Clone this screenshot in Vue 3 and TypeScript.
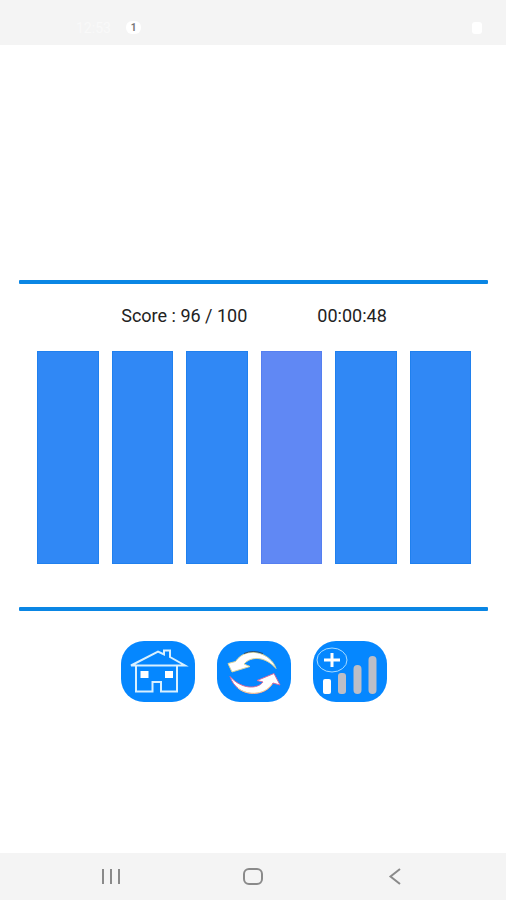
<script setup lang="ts">
import { ref } from 'vue'

interface Bar {
  id: number
  active: boolean
}

const score = ref(96)
const maxScore = 100
const elapsed = ref('00:00:48')
const bars = ref<Bar[]>([1, 2, 3, 4, 5, 6].map((id) => ({ id, active: id === 4 })))

function select(id: number) {
  bars.value.forEach((bar) => {
    bar.active = bar.id === id
  })
}
</script>

<template>
  <div class="screen">
    <header class="status">
      <span class="clock">12:53</span>
      <span class="badge">1</span>
      <span class="battery"></span>
    </header>

    <main class="main">
      <section class="game">
        <div class="info">
          <span>Score : {{ score }} / {{ maxScore }}</span>
          <span>{{ elapsed }}</span>
        </div>
        <div class="bars">
          <button
            v-for="bar in bars"
            :key="bar.id"
            type="button"
            class="bar"
            :class="{ active: bar.active }"
            :aria-label="`Bar ${bar.id}`"
            @click="select(bar.id)"
          ></button>
        </div>
      </section>

      <div class="actions">
        <button type="button" class="action" aria-label="Home">
          <svg viewBox="0 0 74 61" fill="none" stroke="#d8f0ff" stroke-width="2">
            <path d="M10 24.5 37 10.5l6 3V9.500h6V16L64 24.500Z" />
            <path d="M15 25v25.500H31.500V41h8.500v9.500h16V25" />
            <path d="M19.500 30h8v7h-8zM44 30h8v7h-8z" fill="#fff" stroke="none" />
          </svg>
        </button>
        <button type="button" class="action" aria-label="Restart">
          <svg viewBox="0 0 74 61" stroke-linejoin="round">
            <path
              d="M11 22.500 15 31 33 25.500 27 23C34 15 48 15 59 27.500C54 12 30 4 18.500 20.500Z"
              fill="#fff"
              stroke="#d9d39a"
              stroke-width="1"
            />
            <path d="M27 12.500Q36 8.500 46 12.500" fill="none" stroke="#344d68" stroke-width="1" />
            <path
              d="M13 35.500C20 57 48 57 56 42L63 44 57 32.500 40 39.500 46 41C41 48 25 49 13 35.500Z"
              fill="#fff"
              stroke="#d66a9c"
              stroke-width="1"
            />
            <path d="M21 47C30 55 48 54 55 43" fill="none" stroke="#eee1a0" stroke-width="1" />
          </svg>
        </button>
        <button type="button" class="action" aria-label="Increase level">
          <svg viewBox="0 0 74 61">
            <rect x="10" y="38" width="8" height="15" rx="2" fill="#fff" />
            <rect x="25" y="32" width="8" height="21" rx="3" fill="#bcbec7" />
            <rect x="40.500" y="24" width="8" height="29" rx="4" fill="#bcbec7" />
            <rect x="55.500" y="15" width="8" height="38" rx="4" fill="#bcbec7" />
            <ellipse cx="19" cy="19" rx="15" ry="12" fill="none" stroke="#a9dcff" stroke-width="1" />
            <path d="M19 12v14M11 19h16" stroke="#fff" stroke-width="3" />
          </svg>
        </button>
      </div>
    </main>

    <nav class="nav" aria-label="System navigation">
      <button type="button" aria-label="Recent apps">
        <svg viewBox="0 0 24 24"><path d="M4 4v15M12 4v15M20 4v15" /></svg>
      </button>
      <button type="button" aria-label="Home screen">
        <svg viewBox="0 0 24 24"><rect x="3" y="4" width="18" height="15" rx="5" /></svg>
      </button>
      <button type="button" aria-label="Back">
        <svg viewBox="0 0 24 24"><path d="M17 4 7.500 11.500 17 19" /></svg>
      </button>
    </nav>
  </div>
</template>

<style>
body {
  margin: 0;
  background: #fff;
}
</style>

<style scoped>
.screen {
  min-height: 100vh;
  display: flex;
  flex-direction: column;
  font-family: Roboto, sans-serif;
  color: #222;
}

button {
  padding: 0;
  border: 0;
  background: none;
  cursor: pointer;
}

svg {
  display: block;
}

.status {
  height: 45px;
  box-sizing: border-box;
  padding: 10px 24px 0 76px;
  display: flex;
  align-items: center;
  background: #f4f4f4;
}

.clock {
  width: 50px;
  font-size: 14px;
  line-height: 16px;
  color: #f9f9f9;
}

.badge {
  width: 15px;
  height: 13px;
  border-radius: 6px;
  background: #fff;
  color: #777;
  font-size: 10px;
  font-weight: 700;
  line-height: 13px;
  text-align: center;
}

.battery {
  width: 10px;
  height: 12px;
  margin-left: auto;
  border-radius: 3px;
  background: #fff;
}

.main {
  flex: 1;
  padding: 235px 18px 32px 19px;
}

.game {
  position: relative;
  padding: 24px 17px 47px 18px;
}

.game::before,
.game::after {
  content: '';
  position: absolute;
  left: 0;
  right: 0;
  height: 4px;
  border-radius: 1px;
  background: #0a86e4;
}

.game::before {
  top: 0;
}

.game::after {
  bottom: 0;
}

.info {
  display: flex;
  justify-content: center;
  gap: 70px;
  margin-bottom: 23px;
  font-size: 18px;
  line-height: 24px;
  white-space: nowrap;
}

.bars {
  display: grid;
  grid-template-columns: repeat(6, 1fr);
  gap: 13px;
}

.bar {
  height: 213px;
  border: 1px solid #2080ee;
  background: #3088f5;
}

.bar.active {
  border-color: #557ff0;
  background: #6088f4;
}

.actions {
  display: flex;
  justify-content: center;
  gap: 22px;
  margin-top: 30px;
}

.action {
  width: 74px;
  height: 61px;
  border-radius: 23px;
  background: #0587ff;
}

.nav {
  height: 47px;
  display: grid;
  grid-template-columns: repeat(3, 142px);
  justify-content: center;
  background: #f4f4f4;
}

.nav button {
  display: grid;
  place-items: center;
}

.nav svg {
  width: 24px;
  height: 24px;
  fill: none;
  stroke: #8a8a8a;
  stroke-width: 2;
}
</style>
